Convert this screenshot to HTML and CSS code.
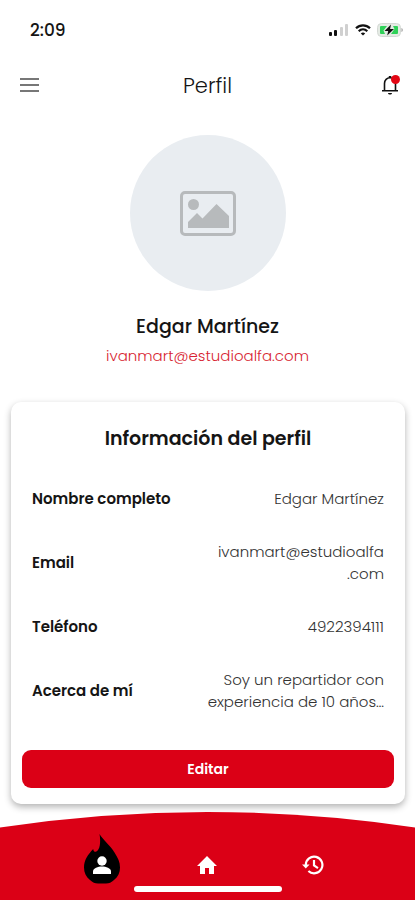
FILE: index.html
```html
<!DOCTYPE html>
<html lang="es">
<head>
    <meta charset="UTF-8">
    <meta name="viewport" content="width=device-width, initial-scale=1.0">
    <title>Perfil</title>
    <link rel="stylesheet" href="styles.css">
</head>
<body>
    <div class="status-bar">
        <span class="time">2:09</span>
        <div class="status-icons">
            <svg width="20" height="12" viewBox="0 0 20 12">
                <rect x="0" y="8" width="3" height="4" rx="1" fill="#111"/>
                <rect x="5" y="6" width="3" height="6" rx="1" fill="#111"/>
                <rect x="11" y="3" width="3" height="9" rx="1" fill="#d0d0d0"/>
                <rect x="16" y="0" width="3" height="12" rx="1" fill="#d0d0d0"/>
            </svg>
            <svg width="16" height="12" viewBox="0 0 16 12" fill="none" stroke="#111" stroke-width="2.2">
                <path d="M1 4.2c4-3.9 10-3.9 14 0M3.7 7.2c2.5-2.4 6.1-2.4 8.6 0"/>
                <path d="M8 11.6L5.8 9.4c1.3-1.1 3.1-1.1 4.4 0z" fill="#111" stroke="none"/>
            </svg>
            <svg width="26" height="14" viewBox="0 0 26 14">
                <rect x="0.5" y="0.5" width="23" height="13" rx="4" fill="#e4ebe4" stroke="#d4d8d4"/>
                <path d="M4 3h6L6.500 7.500 8 11H4a1 1 0 0 1-1-1V4a1 1 0 0 1 1-1zM20 3h-4l1.500 3-3.500 5h6a1 1 0 0 0 1-1V4a1 1 0 0 0-1-1z" fill="#2fd158"/>
                <path d="M14 1.500L7.500 8h3.700l-1 4.500L17 6h-3.900z" fill="#111"/>
                <path d="M24.500 5c1.600.6 1.600 3.400 0 4z" fill="#999"/>
            </svg>
        </div>
    </div>

    <header class="header">
        <button class="icon-button menu" type="button" aria-label="Menú">
            <svg width="20" height="14" viewBox="0 0 20 14" fill="#777">
                <path d="M0 0h19v2H0zM0 6h19v2H0zM0 12h19v2H0z"/>
            </svg>
        </button>
        <h1>Perfil</h1>
        <button class="icon-button bell" type="button" aria-label="Notificaciones">
            <svg width="18" height="20" viewBox="0 0 18 20">
                <path d="M3.500 15V8.500C3.500 5 6 2.800 9 2.800s5.500 2.200 5.500 5.700V15M1 15.800h16" fill="none" stroke="#111" stroke-width="1.600"/>
                <path d="M7.800 1h2.400v2H7.800zM7 18h4c0 2-4 2-4 0z" fill="#111"/>
            </svg>
            <span class="badge"></span>
        </button>
    </header>

    <main>
        <section class="profile">
            <div class="avatar">
                <svg width="56" height="45" viewBox="0 0 56 45">
                    <rect x="1.500" y="1.500" width="53" height="42" rx="3.500" fill="none" stroke="#b7babc" stroke-width="3"/>
                    <circle cx="13.500" cy="13.500" r="5.500" fill="#b7babc"/>
                    <path d="M8 37v-6l9-9 5.500 5.500L36.500 13 49 25v12z" fill="#b7babc"/>
                </svg>
            </div>
            <h2>Edgar Martínez</h2>
            <a class="profile-email" href="mailto:ivanmart@estudioalfa.com">ivanmart@estudioalfa.com</a>
        </section>

        <section class="card">
            <h3>Información del perfil</h3>
            <dl class="info">
                <div class="row">
                    <dt>Nombre completo</dt>
                    <dd>Edgar Martínez</dd>
                </div>
                <div class="row">
                    <dt>Email</dt>
                    <dd>ivanmart@estudioalfa<wbr>.com</dd>
                </div>
                <div class="row">
                    <dt>Teléfono</dt>
                    <dd>4922394111</dd>
                </div>
                <div class="row">
                    <dt>Acerca de mí</dt>
                    <dd>Soy un repartidor con experiencia de 10 años…</dd>
                </div>
            </dl>
            <button class="edit-button" type="button">Editar</button>
        </section>
    </main>

    <nav class="tab-bar">
        <svg class="tab-curve" viewBox="0 0 415 88" preserveAspectRatio="none">
            <path d="M0 15.500Q207 -15.500 415 15.500V88H0z" fill="#db0016"/>
        </svg>
        <a href="#perfil" aria-label="Perfil">
            <svg class="flame" width="36" height="50" viewBox="0 0 36 50">
                <path d="M15.500 0C19 6 26 11 30.500 18.500 34 24 36 28 36 33.500c0 5-2 9.500-6 12.500-2.500 2.500-5 3.500-8 3.500h-8c-3 0-5.500-1-8-3.500-4-3-6-7.500-6-12.500C0 26 4 20.500 9.200 15c.2 2 1.200 3 2.600 2.800C16 16.500 17 8 15.500 0z" fill="#000"/>
                <circle cx="18" cy="27" r="4.700" fill="#fff"/>
                <path d="M9 40v-2.500c0-3.500 5-5 9-5s9 1.500 9 5V40z" fill="#fff"/>
            </svg>
        </a>
        <a href="#inicio" aria-label="Inicio">
            <svg width="20" height="18" viewBox="0 0 20 18" fill="#fff">
                <path d="M8 18v-6h4v6h5v-8h3L10 0 0 10h3v8z"/>
            </svg>
        </a>
        <a href="#historial" aria-label="Historial">
            <svg width="22" height="20" viewBox="0 0 22 20" fill="none" stroke="#fff" stroke-width="2.200">
                <path d="M3.800 11V10a8.300 8.300 0 1 1 2.600 6M12 5v5.500l4 2.600"/>
                <path d="M0 9.500h7.600L3.800 13.500z" fill="#fff" stroke="none"/>
            </svg>
        </a>
        <span class="home-indicator"></span>
    </nav>
</body>
</html>
```
FILE: styles.css
```css
* { box-sizing: border-box; }
body { font-family: Poppins, Inter, sans-serif; margin: 0; min-height: 100vh; display: flex; flex-direction: column; background: #fff; color: #151515; }
h1, h2, h3, dl, dd { margin: 0; }
svg { display: block; }

.status-bar { display: flex; justify-content: space-between; align-items: center; height: 60px; padding: 0 12px 0 30px; }
.time { font-size: 17px; font-weight: 500; }
.status-icons { display: flex; align-items: center; gap: 6px; }

.header { display: grid; grid-template-columns: 1fr auto 1fr; align-items: center; height: 50px; padding: 0 16px; }
.header h1 { font-size: 21px; font-weight: 300; }
.icon-button { position: relative; padding: 0; border: none; background: none; cursor: pointer; }
.menu { justify-self: start; padding-left: 4px; }
.bell { justify-self: end; }
.badge { position: absolute; top: 0; right: -1px; width: 9px; height: 9px; border-radius: 50%; background: #e30613; }

.profile { display: flex; flex-direction: column; align-items: center; padding: 25px 16px 0; }
.avatar { display: flex; justify-content: center; align-items: center; width: 156px; height: 156px; border-radius: 50%; background: #e9edf1; }
.profile h2 { margin-top: 22px; font-size: 19px; line-height: 28px; font-weight: 500; }
.profile-email { margin-top: 4px; font-size: 15px; line-height: 22px; font-weight: 300; color: #d81f33; text-decoration: none; }

.card { margin: 35px 10px 8px 11px; padding: 23px 11px 16px; border-radius: 10px; background: #fff; box-shadow: 0 3px 7px rgba(0,0,0,0.3); }
.card h3 { font-size: 19px; line-height: 28px; font-weight: 600; text-align: center; }
.info { padding: 14px 10px 27px; }
.row { display: grid; grid-template-columns: 1fr 52%; align-items: center; height: 64px; font-size: 15px; line-height: 22px; }
.row dt { font-weight: 600; }
.row dd { font-weight: 300; text-align: right; color: #333; }
.edit-button { display: block; width: 100%; height: 38px; border: none; border-radius: 9px; background: #db0016; color: #fff; font-family: inherit; font-size: 14px; font-weight: 600; cursor: pointer; }

.tab-bar { position: relative; display: grid; grid-template-columns: repeat(3, 1fr); align-items: center; justify-items: center; height: 88px; margin-top: auto; padding: 18px 49px 0; }
.tab-bar a { position: relative; }
.tab-curve { position: absolute; top: 0; left: 0; width: 100%; height: 100%; }
.flame { margin-bottom: 12px; }
.home-indicator { position: absolute; bottom: 8px; left: 50%; width: 148px; height: 6px; border-radius: 3px; background: #fff; transform: translateX(-50%); }
```
